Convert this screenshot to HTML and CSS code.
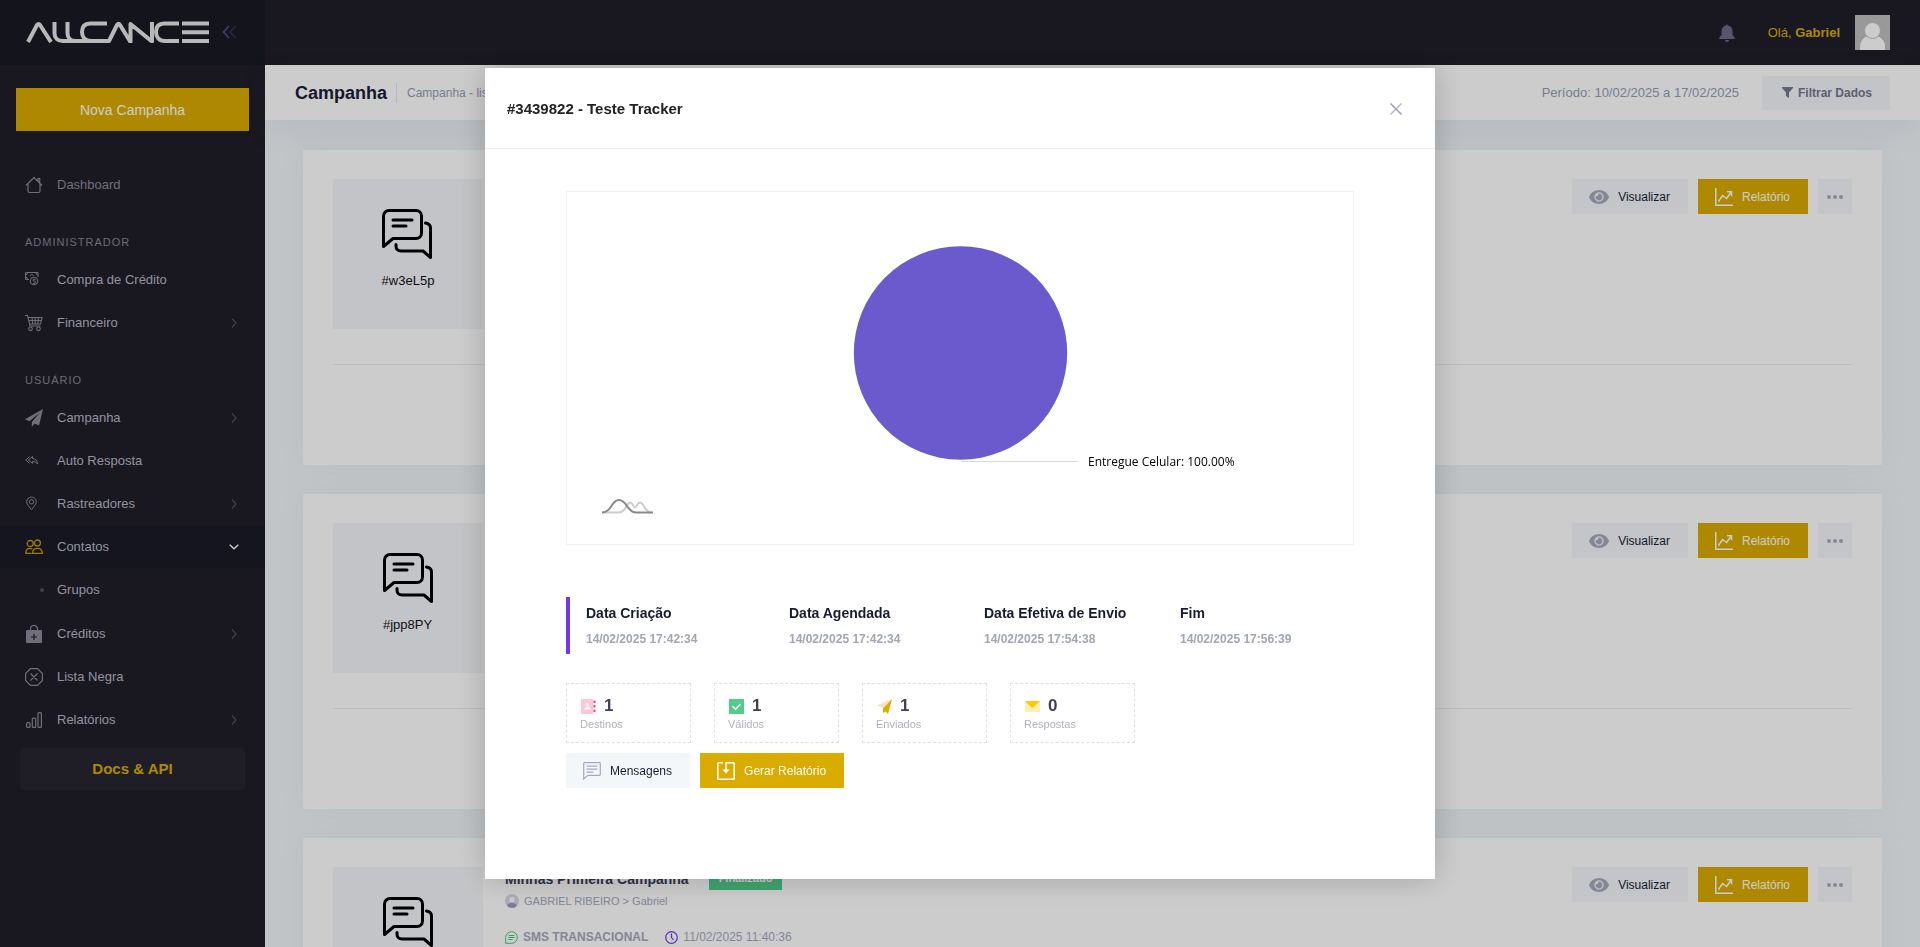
FILE: index.html
```html
<!DOCTYPE html>
<html lang="pt-BR">
<head>
<meta charset="utf-8">
<title>Campanha</title>
<meta name="viewport" content="width=device-width, initial-scale=1">
<link rel="stylesheet" href="styles.css">
</head>
<body>
<svg class="defs" aria-hidden="true">
  <symbol id="i-chats" viewBox="0 0 50 50"><g fill="none" stroke="#000" stroke-width="3" stroke-linecap="round" stroke-linejoin="round"><path d="M1.500 37.500V7a5.500 5.500 0 0 1 5.500-5.500h27a5.500 5.500 0 0 1 5.500 5.500v17a5.500 5.500 0 0 1-5.500 5.500H11z"/><path d="M11 11h19M11 17h13M43.500 14c3 .5 5 2 5 5v29.500L41 42H19c-3 0-5-2-5-5v-1.500"/></g></symbol>
  <symbol id="i-eye" viewBox="0 0 20 14"><path fill="currentColor" fill-rule="evenodd" d="M10 0C5 0 1.500 3 0 7c1.500 4 5 7 10 7s8.500-3 10-7c-1.500-4-5-7-10-7zm0 2.300a4.700 4.700 0 1 1 0 9.400 4.700 4.700 0 0 1 0-9.400z"/><path fill="currentColor" d="M10 3.600A3.400 3.400 0 1 1 6.800 6a1.700 1.700 0 0 0 2.400-2.200z"/></symbol>
  <symbol id="i-chart" viewBox="0 0 18 18"><path d="M.8 0v17.200H18M3.500 13.500l4-6 4 3L16.300 4M12 3.700h4.500v4.500" fill="none" stroke="currentColor" stroke-width="1.500"/></symbol>
  <symbol id="i-dots" viewBox="0 0 16 4"><g fill="currentColor"><circle cx="2" cy="2" r="2"/><circle cx="8" cy="2" r="2"/><circle cx="14" cy="2" r="2"/></g></symbol>
  <symbol id="i-right" viewBox="0 0 6 10"><path d="M1 .5 5 5 1 9.500" fill="none" stroke="currentColor" stroke-width="1.200"/></symbol>
</svg>

<div class="app">
  <aside class="aside">
    <div class="brand">
      <a href="#" class="brand-logo" aria-label="Allcance">
        <svg viewBox="0 0 183 22" width="183" height="22"><g fill="none" stroke="#e6e6e6" stroke-width="4" stroke-linejoin="round"><path d="M2 21 11 4Q12.500 2 14 4L25 21"/><path d="M28.500 1v11c0 5 3 8 8 8H83L91 4q1.500-2.500 3 0l10.500 17V3L126 20.500V1"/><path d="M41.500 1v11c0 5 3 8 8 8M81 2.500H64C58 2.500 56 6 56 11s3 9 9 9M153 2.500h-15c-6 0-8 3.500-8 8.500s3 9 9 9h14M156 2.500h27M156 11.200h27M156 20h27"/></g></svg>
      </a>
      <button class="brand-toggle" aria-label="Recolher menu"><svg width="14" height="14" viewBox="0 0 14 14" fill="none" stroke-width="1.700"><path d="M7 1 1.500 7 7 13" stroke="#514a92"/><path d="M13.500 1 8 7l5.500 6" stroke="#343150"/></svg></button>
    </div>
    <button class="new-campaign">Nova Campanha</button>
    <nav class="menu">
      <a class="item item-dim" href="#"><svg class="ico" viewBox="0 0 18 18"><path d="M1 9.500 9 1.500l8 8M3 8v7q0 1.500 1.500 1.500h9Q15 16.500 15 15V8M13 5V2.500h1.700V7" fill="none" stroke="currentColor" stroke-width="1.200"/></svg>Dashboard</a>
      <h4 class="section">ADMINISTRADOR</h4>
      <a class="item" href="#"><svg class="ico" viewBox="0 0 18 18"><g fill="none" stroke="currentColor"><path d="M4 8.500H.5v-7H13V6M.5 4q2 0 2-2.500M11 1.500Q11 4 13 4M.5 6q2 0 2 2.500"/><circle cx="9" cy="10" r="3.800"/><path d="M10.500 8.500Q8 7.500 8 9t1.500 1 .5 2-2 0M5 4.500q2-2 3.500 0"/></g></svg>Compra de Crédito</a>
      <a class="item" href="#"><svg class="ico" viewBox="0 0 18 18"><g fill="none" stroke="currentColor" stroke-width="1.100"><path d="M0 1.500h2.500L5 12h10.500M3 3.500h14L15.500 10h-11M3.500 6.500h13M7 3.500l.7 6.500M10.200 3.500V10M13.500 3.500 12.800 10"/><circle cx="5.500" cy="14.800" r="1.800"/><circle cx="13.500" cy="14.800" r="1.800"/></g></svg>Financeiro<svg class="arrow"><use href="#i-right"/></svg></a>
      <h4 class="section">USUÁRIO</h4>
      <a class="item" href="#"><svg class="ico" viewBox="0 0 18 18"><path fill="currentColor" d="M18 0 0 10.200l4.500 2L15 3.500 6.800 13v5l2.700-3.500 4.500 2z"/></svg>Campanha<svg class="arrow"><use href="#i-right"/></svg></a>
      <a class="item" href="#"><svg class="ico" viewBox="0 0 18 18"><path d="M4.500 4.500.7 8l3.800 3.300M7.500 4.500 3.300 8l4.200 3.300V9.500c2.700 0 4 .8 5 2.500 0-3.200-1.800-5.300-5-5.500z" fill="none" stroke="currentColor" stroke-linejoin="round"/></svg>Auto Resposta</a>
      <a class="item" href="#"><svg class="ico" viewBox="0 0 18 18"><g fill="none" stroke="currentColor"><path d="M6.500 14.800C4 11.500 1.700 9 1.700 6.800a4.800 4.800 0 0 1 9.600 0c0 2.200-2.300 4.700-4.800 8z"/><circle cx="6.500" cy="6.800" r="2.200"/></g></svg>Rastreadores<svg class="arrow"><use href="#i-right"/></svg></a>
      <a class="item item-open" href="#"><svg class="ico" viewBox="0 0 18 18"><g fill="none" stroke="currentColor" stroke-width="1.300"><circle cx="5.200" cy="5.500" r="3"/><circle cx="12.400" cy="5" r="3"/><path d="M6.500 15.300H.8c0-3.500 1.500-5 4-5 1.200 0 2 .2 2.600.7M7.500 15.300c0-3.500 1.800-5 4.900-5s4.900 1.500 4.900 5z"/></g></svg>Contatos<svg class="arrow arrow-down" viewBox="0 0 10 6"><path d="m.7.700 4.300 4 4.300-4" fill="none" stroke="currentColor" stroke-width="1.400"/></svg></a>
      <div class="submenu"><a class="item" href="#"><span class="bullet"></span>Grupos</a></div>
      <a class="item" href="#"><svg class="ico" viewBox="0 0 18 18"><path d="M5.500 5.500V4a3.500 3.500 0 0 1 7 0v1.500" fill="none" stroke="currentColor" stroke-width="1.200"/><path fill="currentColor" fill-rule="evenodd" d="M1 6q0-1 1-1h14q1 0 1 1v11q0 1-1 1H2q-1 0-1-1zm7.400 3v2.400H6v1.200h2.400V15h1.200v-2.400H12v-1.200H9.600V9z"/></svg>Créditos<svg class="arrow"><use href="#i-right"/></svg></a>
      <a class="item" href="#"><svg class="ico" viewBox="0 0 18 18"><path d="M5.500.6h7l4.900 4.900v7l-4.900 4.900h-7L.6 12.500v-7zM5.500 5.500l7 7M12.500 5.500l-7 7" fill="none" stroke="currentColor" stroke-width="1.200"/></svg>Lista Negra</a>
      <a class="item" href="#"><svg class="ico" viewBox="0 0 18 18"><g fill="none" stroke="currentColor" stroke-width="1.200"><rect x="1.600" y="11.600" width="3.400" height="4.800" rx="1"/><rect x="7.300" y="7.100" width="3.400" height="9.300" rx="1"/><rect x="13" y="1.600" width="3.400" height="14.800" rx="1"/></g></svg>Relatórios<svg class="arrow"><use href="#i-right"/></svg></a>
    </nav>
    <a class="docs" href="#">Docs &amp; API</a>
  </aside>

  <div class="main">
    <header class="topbar">
      <button class="bell" aria-label="Notificações"><svg width="16" height="18" viewBox="0 0 16 18" fill="#6d6b8a"><path d="M7 1.500a1 1 0 0 1 2 0C12 2 13.500 4.500 13.500 7.500V11l2.300 3v1H.2v-1l2.300-3V7.500c0-3 1.500-5.500 4.500-6zM6 16h4a2 2 0 0 1-4 0z"/></svg></button>
      <a class="user" href="#"><span>Olá, <b>Gabriel</b></span>
        <svg width="35" height="35" viewBox="0 0 35 35"><path fill="#c0c0c0" d="M0 0h35v35H0z"/><path d="M5 35v-3c0-7 5-11.500 12.500-11.500S30 25 30 32v3z" fill="#fff"/><circle cx="17.500" cy="15.500" r="8" fill="#fff" stroke="#c0c0c0"/></svg></a>
    </header>
    <div class="subheader">
      <h1>Campanha</h1><span class="sep"></span><span class="crumb">Campanha - listagem</span>
      <span class="period">Período: 10/02/2025 a 17/02/2025</span>
      <button class="filter"><svg width="11" height="11" viewBox="0 0 11 11"><path fill="currentColor" d="M0 0h11v1L7 5.500V11L4 9V5.500L0 1z"/></svg>Filtrar Dados</button>
    </div>
    <main class="content">
      <article class="card">
        <div class="thumb"><div><svg><use href="#i-chats"/></svg><p>#w3eL5p</p></div></div>
        <div class="info"></div>
        <div class="actions"><button class="btn"><svg class="eye"><use href="#i-eye"/></svg>Visualizar</button><button class="btn btn-gold"><svg class="i18"><use href="#i-chart"/></svg>Relatório</button><button class="btn btn-dots" aria-label="Mais"><svg><use href="#i-dots"/></svg></button></div>
        <div class="card-foot"></div>
      </article>
      <article class="card">
        <div class="thumb"><div><svg><use href="#i-chats"/></svg><p>#jpp8PY</p></div></div>
        <div class="info"></div>
        <div class="actions"><button class="btn"><svg class="eye"><use href="#i-eye"/></svg>Visualizar</button><button class="btn btn-gold"><svg class="i18"><use href="#i-chart"/></svg>Relatório</button><button class="btn btn-dots" aria-label="Mais"><svg><use href="#i-dots"/></svg></button></div>
        <div class="card-foot"></div>
      </article>
      <article class="card">
        <div class="thumb"><div><svg><use href="#i-chats"/></svg></div></div>
        <div class="info">
          <div class="name"><h2>Minhas Primeira Campanha</h2><span class="badge">Finalizado</span></div>
          <div class="owner"><svg width="14" height="14" viewBox="0 0 14 14"><circle cx="7" cy="7" r="7" fill="#d6d7e0"/><circle cx="7" cy="5.500" r="2.600" fill="#fff"/><path d="M2 11.500Q3 9 7 9t5 2.500Q10 14 7 14t-5-2.500z" fill="#9a9bbb"/></svg>GABRIEL RIBEIRO &gt; Gabriel</div>
          <div class="meta"><svg width="13" height="13" viewBox="0 0 13 13" fill="none" stroke="#41c883"><path d="M.7 12.300V6.500a5.800 5.800 0 1 1 5.800 5.800zM3.500 4.500h6M3.500 6.500h6M3.500 8.500h4"/></svg><b>SMS TRANSACIONAL</b><svg class="clock" width="13" height="13" viewBox="0 0 13 13" fill="none" stroke="#7337ee" stroke-width="1.200"><circle cx="6.500" cy="6.500" r="5.800"/><path d="M6.500 2.500v4l2 2.500"/></svg><span>11/02/2025 11:40:36</span></div>
        </div>
        <div class="actions"><button class="btn"><svg class="eye"><use href="#i-eye"/></svg>Visualizar</button><button class="btn btn-gold"><svg class="i18"><use href="#i-chart"/></svg>Relatório</button><button class="btn btn-dots" aria-label="Mais"><svg><use href="#i-dots"/></svg></button></div>
        <div class="card-foot"></div>
      </article>
    </main>
  </div>
</div>

<div class="backdrop">
  <section class="modal" role="dialog" aria-modal="true" aria-labelledby="modal-title">
    <header class="modal-head">
      <h2 id="modal-title">#3439822 - Teste Tracker</h2>
      <button class="close" aria-label="Fechar"><svg width="12" height="12" viewBox="0 0 12 12" fill="none" stroke-width="1.500"><path d="M11.500.5.500 11.500" stroke="#b4b6ca"/><path d="m.5.500 11 11" stroke="#9a9cb8"/></svg></button>
    </header>
    <div class="modal-body">
      <div class="chart">
        <svg viewBox="0 0 786 352" role="img" aria-label="Entregue Celular: 100.00%">
          <circle cx="393.500" cy="161" r="106.700" fill="#6a5acd"/>
          <path d="M394 269.500h117" stroke="#d9d9d9"/>
          <text x="521" y="274">Entregue Celular: 100.00%</text>
          <g fill="none" stroke-width="2"><path d="M36 320.500h15c9 0 8-10 12-10 3 0 3 5 5 5s2-5 5-5c4 0 5 10 11 10" stroke="#ccc"/><path d="M35 320.500c10 0 9-12.500 17-12.500s8 12.500 17 12.500h17" stroke="#888"/></g>
        </svg>
      </div>
      <div class="dates">
        <div><h3>Data Criação</h3><p>14/02/2025 17:42:34</p></div>
        <div><h3>Data Agendada</h3><p>14/02/2025 17:42:34</p></div>
        <div><h3>Data Efetiva de Envio</h3><p>14/02/2025 17:54:38</p></div>
        <div><h3>Fim</h3><p>14/02/2025 17:56:39</p></div>
      </div>
      <div class="stats">
        <div class="stat"><strong><svg viewBox="0 0 15 15"><path fill="#fdc7d6" d="M0 0h12v15H0z"/><path stroke="#fd397a" stroke-width="2" stroke-dasharray="2.500 2" d="M13.500 1.500V15"/><circle cx="6.500" cy="5.500" r="1.700" fill="#fff"/><path fill="#fff" d="M3.500 10.500q0-2.500 3-2.500t3 2.500z"/></svg>1</strong><span>Destinos</span></div>
        <div class="stat"><strong><svg viewBox="0 0 15 15"><path fill="#50cd89" d="M0 0h15v15H0z"/><path d="m3.500 7.300 3 3 5-5.300" fill="none" stroke="#fff" stroke-width="1.500"/></svg>1</strong><span>Válidos</span></div>
        <div class="stat"><strong><svg viewBox="0 0 15 15"><path fill="#f5e6b3" d="M15 0 0 6.500 6.500 9z"/><path fill="#daac00" d="M15 0 6 9.500V14l2.500-1.500L11 15z"/></svg>1</strong><span>Enviados</span></div>
        <div class="stat"><strong><svg viewBox="0 0 15 15"><path fill="#ffefb3" d="M0 2h15v11H0z"/><path fill="#ffc700" d="M0 2h15L7.500 9z"/></svg>0</strong><span>Respostas</span></div>
      </div>
      <div class="modal-actions">
        <button class="btn"><svg class="i18" viewBox="0 0 18 18"><path d="M.7 17V1.500Q.7.700 1.500.700h15q.8 0 .8.800v11q0 .8-.8.800H5zM3.500 4.200h11M3.500 7.200h11M3.500 10.200h7" fill="none" stroke="currentColor" stroke-width="1.200"/></svg>Mensagens</button>
        <button class="btn btn-gold"><svg class="i18" viewBox="0 0 18 18"><path d="M6 .8H1.500q-.7 0-.7.700v15q0 .7.700.7h15q.7 0 .7-.7v-15q0-.7-.7-.7H9V8" fill="none" stroke="currentColor" stroke-width="1.500"/><path fill="currentColor" d="M5.500 7.500h7L9 11.500z"/></svg>Gerar Relatório</button>
      </div>
    </div>
  </section>
</div>
</body>
</html>
```
FILE: styles.css
```css
* { box-sizing: border-box; }
body {
  margin: 0;
  overflow: hidden;
  font-family: "Liberation Sans", Arial, sans-serif;
  font-size: 13px;
  line-height: 20px;
  color: #222;
  background: #f2f7fa;
}
h1, h2, h3, h4, p { margin: 0; }
a { text-decoration: none; }
button { border: 0; padding: 0; background: none; font: inherit; color: inherit; }
svg { display: block; flex: none; }
.defs { position: absolute; width: 0; height: 0; }

.app { display: flex; height: 100vh; overflow: hidden; }

/* Sidebar */
.aside { flex: none; width: 265px; background: #201e29; display: flex; flex-direction: column; }
.brand {
  height: 65px;
  padding: 0 29px 1px 26px;
  display: flex;
  align-items: center;
  justify-content: space-between;
  background: #181a24;
}
.new-campaign {
  height: 43px;
  margin: 23px 16px 32px;
  background: #daac00;
  color: #fff;
  font-size: 14px;
}
.item {
  display: flex;
  align-items: center;
  height: 43px;
  padding: 0 28px 0 25px;
  gap: 14px;
  color: #b8b8c6;
}
.item-dim { color: #8a8c9c; }
.ico { width: 18px; height: 18px; color: #8b8b9a; }
.arrow { width: 6px; height: 10px; margin-left: auto; color: #505062; }
.section {
  margin: 26px 25px 6px;
  font-size: 11px;
  font-weight: 400;
  letter-spacing: 1px;
  color: #868695;
}
.item-open { background: #191b26; }
.item-open .ico { color: #c79c00; }
.arrow-down { width: 10px; height: 6px; margin-right: -2px; color: #fff; }
.submenu { padding-bottom: 1px; }
.bullet { width: 4px; height: 4px; margin: 0 -1px 0 15px; border-radius: 50%; background: #505062; }
.docs {
  margin: 7px 20px 0;
  line-height: 42px;
  border-radius: 4px;
  background: #272630;
  color: #daac00;
  font-size: 15px;
  font-weight: 700;
  text-align: center;
}

/* Header */
.main { flex: 1; min-width: 0; display: flex; flex-direction: column; }
.topbar {
  flex: none;
  height: 65px;
  padding: 0 30px;
  display: flex;
  align-items: center;
  justify-content: flex-end;
  gap: 33px;
  background: #201e29;
}
.user { display: flex; align-items: center; gap: 15px; color: #daac00; }
.subheader {
  flex: none;
  height: 55px;
  padding: 0 30px;
  display: flex;
  align-items: center;
  background: #fff;
  box-shadow: 0 10px 30px rgba(82, 63, 105, .08);
}
.subheader h1 { font-size: 18px; color: #1a1c38; }
.sep { width: 1px; height: 20px; margin: 0 10px 0 9px; background: #e2e5ec; }
.crumb, .period { color: #959cb6; font-size: 12px; }
.period { margin: 0 23px 0 auto; font-size: 13px; }
.filter {
  height: 34px;
  padding: 0 18px 0 20px;
  display: flex;
  align-items: center;
  gap: 5px;
  background: #f3f6f9;
  color: #74788f;
  font-size: 12px;
  font-weight: 700;
}

/* Campaign list */
.content { padding: 30px 38px; }
.card {
  display: grid;
  grid-template-columns: 150px 1fr auto;
  padding: 29px 30px 0;
  margin-bottom: 29px;
  background: #fff;
  box-shadow: 0 0 30px rgba(82, 63, 105, .05);
}
.thumb {
  height: 150px;
  display: flex;
  justify-content: center;
  padding-top: 30px;
  background: #f4f6f9;
  color: #111;
}
.thumb svg { width: 50px; height: 50px; }
.thumb p { padding-top: 12px; }
.info { padding-left: 22px; color: #a5a8bd; }
.name { display: flex; align-items: center; gap: 20px; }
.name h2 { font-size: 14px; color: #3a3c55; }
.badge {
  padding: 0 10px;
  line-height: 23px;
  background: #50cd89;
  color: #fff;
  font-size: 11px;
  font-weight: 700;
}
.owner { display: flex; align-items: center; gap: 5px; margin-top: 1px; font-size: 11px; }
.meta { display: flex; align-items: center; gap: 5px; margin-top: 16px; font-size: 12px; }
.clock { margin-left: 12px; }
.actions { display: flex; gap: 10px; align-items: flex-start; }
.btn {
  height: 35px;
  padding: 0 18px 0 17px;
  display: flex;
  align-items: center;
  gap: 9px;
  background: #f4f7fa;
  color: #181c32;
  font-size: 12px;
}
.btn svg { color: #a7a9be; }
.btn-gold { background: #daac00; color: #fff; }
.btn-gold svg { color: #fff; }
.btn-dots { padding: 0 9px; }
.btn-dots svg { width: 16px; height: 4px; }
.eye { width: 20px; height: 14px; }
.i18 { width: 18px; height: 18px; }
.card-foot {
  grid-column: 1 / -1;
  height: 101px;
  margin-top: 35px;
  border-top: 1px solid #ebedf2;
}

/* Report dialog */
.backdrop {
  position: fixed;
  inset: 0;
  padding-top: 68px;
  background: rgba(0, 0, 0, .2);
}
.modal {
  max-width: 950px;
  margin: 0 auto;
  background: #fff;
  box-shadow: 0 0 30px rgba(0, 0, 0, .2);
}
.modal-head {
  height: 81px;
  padding: 2px 33px 0 22px;
  display: flex;
  align-items: center;
  justify-content: space-between;
  border-bottom: 1px solid #ebf0f5;
}
.modal-head h2 { font-size: 15px; }
.modal-body { padding: 42px 81px 91px; }
.chart { border: 1px solid #eff2f5; }
.chart svg { width: 100%; }
.chart text { font: 12px "Open Sans", "Noto Sans", sans-serif; fill: #000; }
.dates {
  display: grid;
  grid-template-columns: 203px 195px 196px 1fr;
  margin-top: 52px;
  padding: 6px 0 5px 16px;
  border-left: 4px solid #7337ee;
}
.dates h3 { font-size: 14px; color: #181c32; }
.dates p { padding-top: 6px; font-size: 12px; font-weight: 700; color: #a1a5b7; white-space: nowrap; }
.stats { display: flex; gap: 23px; margin-top: 29px; }
.stat {
  width: 125px;
  height: 60px;
  padding: 12px 14px 0 13px;
  border: 1px dashed #e0e0ec;
}
.stat strong { display: flex; align-items: center; gap: 8px; padding-left: 1px; font-size: 17px; color: #3f4254; }
.stat strong svg { width: 15px; height: 15px; }
.stat span { display: block; line-height: 17px; font-size: 11px; color: #b0b0c0; }
.modal-actions { display: flex; gap: 10px; margin-top: 10px; }
```
